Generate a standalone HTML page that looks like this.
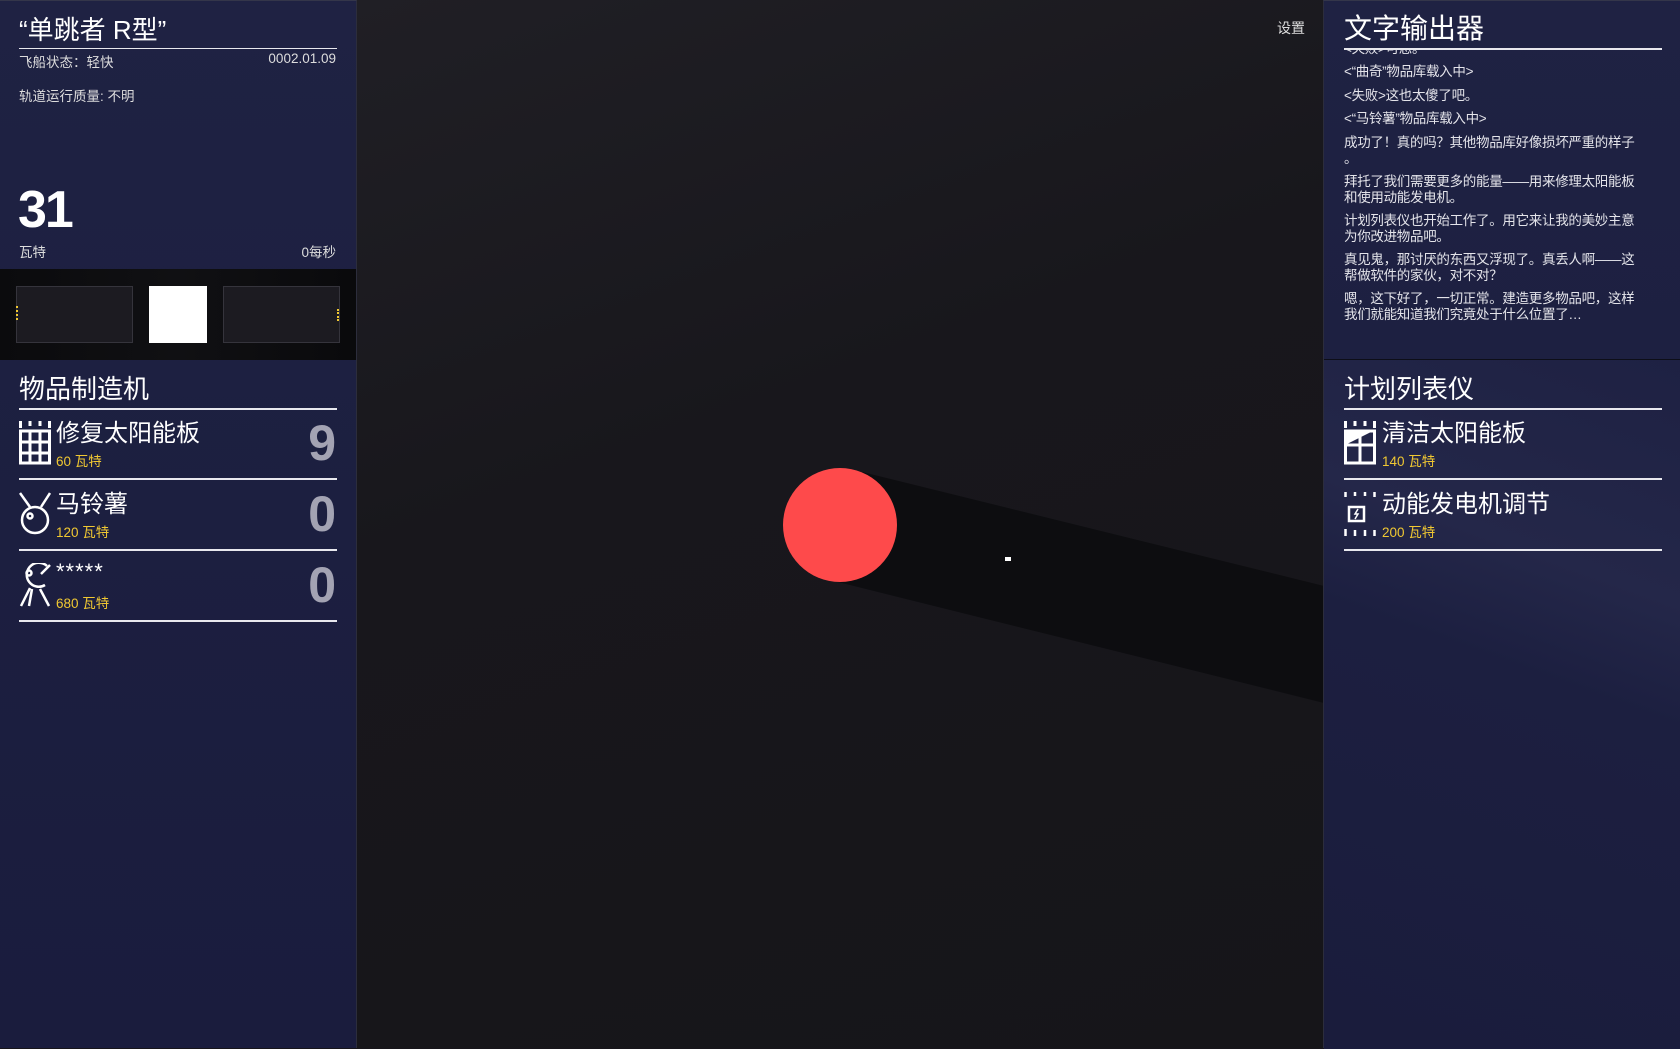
<!DOCTYPE html>
<html><head><meta charset="utf-8"><style>
*{margin:0;padding:0;box-sizing:border-box}
body{width:1680px;height:1048px;overflow:hidden;background:#17151b;font-family:"Liberation Sans","Noto Sans CJK SC",sans-serif;color:#fff;position:relative}
.panel{position:absolute;top:0;height:1048px;background:linear-gradient(180deg,#1f2243 0%,#1c1f40 50%,#1a1c3d 100%)}
#left{left:0;width:357px;border-right:1px solid #2c2d3c;border-top:1px solid #34364a}
#right{left:1323px;width:357px;border-left:1px solid #2c2d3c;border-top:1px solid #34364a}
.abs{position:absolute;white-space:nowrap}
.hl{position:absolute;height:2px;background:#e8e8ee}
.y{color:#f0c832}
.num{position:absolute;right:20px;font-weight:bold;font-size:50px;color:#a3a3b3;font-family:"Liberation Sans",sans-serif}
.msg{position:absolute;left:20px;width:326px;font-size:13.5px;line-height:16px;color:#e4e4ea;letter-spacing:-0.3px}
</style></head><body>
<div id="center" style="position:absolute;left:357px;top:0;width:966px;height:1048px;background:linear-gradient(160deg,#201f25 0%,#18171c 40%,#161519 100%)"></div>
<svg style="position:absolute;left:0;top:0" width="1680" height="1048">
<polygon points="862,472 1324,586 1324,703 838,582" fill="#0d0d10"/>
<circle cx="840" cy="525" r="57" fill="#fe4a4b"/>
<rect x="1005" y="557" width="6" height="4" fill="#fff"/>
</svg>
<div class="abs" style="left:1277px;top:18px;font-size:14px;color:#ddd">设置</div>

<div id="left" class="panel">
<div class="abs" style="left:19px;top:13px;font-size:26px;line-height:32px">“单跳者 R型”</div>
<div class="hl" style="left:19px;top:47px;width:318px;height:1px"></div>
<div class="abs" style="left:19px;top:50px;font-size:13.5px;color:#ddd">飞船状态：轻快</div>
<div class="abs" style="right:20px;top:50px;font-size:13.5px;color:#ddd">0002.01.09</div>
<div class="abs" style="left:19px;top:84px;font-size:13.5px;color:#ddd">轨道运行质量: 不明</div>
<div class="abs" style="left:18px;top:183px;font-size:52px;line-height:52px;font-weight:bold;font-family:'Liberation Sans',sans-serif;letter-spacing:-2px">31</div>
<div class="abs" style="left:19px;top:240px;font-size:13.5px;color:#ddd">瓦特</div>
<div class="abs" style="right:20px;top:240px;font-size:13.5px;color:#ddd">0每秒</div>
<div style="position:absolute;left:0;top:268px;width:356px;height:91px;background:linear-gradient(90deg,#0b0b0d,#101013 50%,#0a0a0c)"></div>
<div style="position:absolute;left:16px;top:285px;width:117px;height:57px;background:#1c1b21;border:1px solid #35343c"></div>
<div style="position:absolute;left:16px;top:305px;width:2px;height:14px;border-left:2px dotted #f0c832"></div>
<div style="position:absolute;left:149px;top:285px;width:58px;height:57px;background:#fff"></div>
<div style="position:absolute;left:223px;top:285px;width:117px;height:57px;background:#1c1b21;border:1px solid #35343c"></div>
<div style="position:absolute;left:337px;top:308px;width:2px;height:12px;border-left:2px dotted #f0c832"></div>

<div class="abs" style="left:19px;top:368px;font-size:26px">物品制造机</div>
<div class="hl" style="left:19px;top:407px;width:318px"></div>

<svg class="abs" style="left:19px;top:420px" width="32" height="44" fill="none" stroke="#fff" stroke-width="3">
<path d="M1.5 0v7M11 0v5M21 0v5M30.5 0v7"/><rect x="1.5" y="10" width="29" height="32"/><path d="M1.5 21h29M1.5 32h29M11 10v32M21 10v32"/></svg>
<div class="abs" style="left:56px;top:412px;font-size:24px">修复太阳能板</div>
<div class="abs y" style="left:56px;top:449px;font-size:13.5px">60 瓦特</div>
<div class="num" style="top:413px">9</div>
<div class="hl" style="left:19px;top:477px;width:318px"></div>

<svg class="abs" style="left:19px;top:491px" width="32" height="44" fill="none" stroke="#fff" stroke-width="2.5">
<path d="M1 1l10 14M31 1l-9 14"/><circle cx="16" cy="28" r="13"/><circle cx="11" cy="24" r="2.5"/></svg>
<div class="abs" style="left:56px;top:483px;font-size:24px">马铃薯</div>
<div class="abs y" style="left:56px;top:520px;font-size:13.5px">120 瓦特</div>
<div class="num" style="top:484px">0</div>
<div class="hl" style="left:19px;top:548px;width:318px"></div>

<svg class="abs" style="left:19px;top:562px" width="32" height="46" fill="none" stroke="#fff" stroke-width="2.5">
<path d="M26 22a12 12 0 1 1 2-19"/><circle cx="10" cy="10" r="2.5"/><path d="M31 2l-9 9"/><path d="M11 25l-9 18M13 26l-3 17M21 26l9 17"/></svg>
<div class="abs" style="left:56px;top:558px;font-size:22px;letter-spacing:1px">*****</div>
<div class="abs y" style="left:56px;top:591px;font-size:13.5px">680 瓦特</div>
<div class="num" style="top:555px">0</div>
<div class="hl" style="left:19px;top:619px;width:318px"></div>
</div>

<div id="right" class="panel">
<div style="position:absolute;left:0;top:359px;width:357px;height:689px;background:linear-gradient(200deg,#1e2143 0%,#242749 30%,#1c1f40 45%,#1a1c3c 100%)"></div>
<div style="position:absolute;left:0;top:358px;width:357px;height:1px;background:#0d0e18"></div>
<div class="abs" style="left:20px;top:10px;font-size:28px;line-height:36px">文字输出器</div>
<div class="msg" style="top:49px;height:6px;overflow:hidden"><div style="margin-top:-9px">&lt;失败&gt;可恶。</div></div>
<div class="hl" style="left:20px;top:47px;width:318px"></div>
<div class="msg" style="top:63px">&lt;“曲奇”物品库载入中&gt;</div>
<div class="msg" style="top:87px">&lt;失败&gt;这也太傻了吧。</div>
<div class="msg" style="top:110px">&lt;“马铃薯”物品库载入中&gt;</div>
<div class="msg" style="top:134px">成功了！真的吗？其他物品库好像损坏严重的样子<br>。</div>
<div class="msg" style="top:173px">拜托了我们需要更多的能量——用来修理太阳能板<br>和使用动能发电机。</div>
<div class="msg" style="top:212px">计划列表仪也开始工作了。用它来让我的美妙主意<br>为你改进物品吧。</div>
<div class="msg" style="top:251px">真见鬼，那讨厌的东西又浮现了。真丢人啊——这<br>帮做软件的家伙，对不对？</div>
<div class="msg" style="top:290px">嗯，这下好了，一切正常。建造更多物品吧，这样<br>我们就能知道我们究竟处于什么位置了…</div>

<div class="abs" style="left:20px;top:368px;font-size:26px">计划列表仪</div>
<div class="hl" style="left:20px;top:407px;width:318px"></div>
<svg class="abs" style="left:20px;top:420px" width="32" height="44" fill="none" stroke="#fff" stroke-width="3">
<path d="M1.5 0v7M11 0v5M21 0v5M30.5 0v7"/><rect x="1.5" y="10" width="29" height="32"/><path d="M1.5 24h29M16 10v32"/><path d="M3 10h26L3 23z" fill="#fff" stroke="none"/></svg>
<div class="abs" style="left:58px;top:412px;font-size:24px">清洁太阳能板</div>
<div class="abs y" style="left:58px;top:449px;font-size:13.5px">140 瓦特</div>
<div class="hl" style="left:20px;top:477px;width:318px"></div>
<svg class="abs" style="left:20px;top:491px" width="32" height="44" fill="none" stroke="#fff" stroke-width="2.5">
<path d="M1.5 0v5M11 0v4M21 0v4M30.5 0v5M1.5 37v7M11 38v6M21 38v6M30.5 38v6"/><rect x="5" y="15" width="15" height="14"/><path d="M14 17l-3 5h3l-3 5" stroke-width="1.5"/></svg>
<div class="abs" style="left:58px;top:483px;font-size:24px">动能发电机调节</div>
<div class="abs y" style="left:58px;top:520px;font-size:13.5px">200 瓦特</div>
<div class="hl" style="left:20px;top:548px;width:318px"></div>
</div>
</body></html>
